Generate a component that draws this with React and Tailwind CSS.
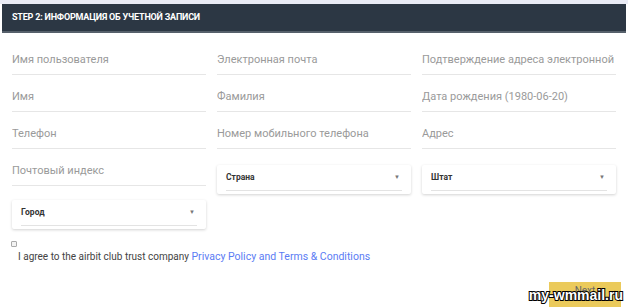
import React from "react";

function TextField({ label }) {
  return (
    <div className="border-b border-[#e6e6e6] pb-[7px]">
      <div className="overflow-hidden whitespace-nowrap text-[11px] leading-[14px] text-[#9a9a9a]">
        {label}
      </div>
    </div>
  );
}

function SelectCard({ label }) {
  return (
    <div className="mt-[1px] h-[29px] rounded-[2px] bg-white px-[9px] pt-[6px] shadow-[0_1px_3px_rgba(0,0,0,0.18)]">
      <div className="flex items-center justify-between border-b border-[#e3e3e3] pb-[7px]">
        <span className="text-[8.5px] font-bold leading-[12px] text-[#333]">
          {label}
        </span>
        <span className="mr-[2px] text-[6px] leading-[12px] text-[#777]">▼</span>
      </div>
    </div>
  );
}

export default function App() {
  return (
    <div
      className="relative h-[307px] w-[628px] overflow-hidden bg-white"
      style={{ fontFamily: "Roboto, 'Liberation Sans', sans-serif" }}
    >
      <div className="h-[4px] bg-[#e9ebf5]" />
      <div className="mx-[2px] flex h-[29px] items-center border-b-2 border-[#56606b] bg-[#2c3744] px-[10px]">
        <span className="text-[9px] font-bold tracking-[-0.2px] text-white">
          STEP 2: ИНФОРМАЦИЯ ОБ УЧЕТНОЙ ЗАПИСИ
        </span>
      </div>

      <div className="mt-[20px] grid grid-cols-3 items-start gap-x-[11px] gap-y-[15px] px-[12px]">
        <TextField label="Имя пользователя" />
        <TextField label="Электронная почта" />
        <TextField label="Подтверждение адреса электронной почты" />
        <TextField label="Имя" />
        <TextField label="Фамилия" />
        <TextField label="Дата рождения (1980-06-20)" />
        <TextField label="Телефон" />
        <TextField label="Номер мобильного телефона" />
        <TextField label="Адрес" />
        <TextField label="Почтовый индекс" />
        <SelectCard label="Страна" />
        <SelectCard label="Штат" />
      </div>

      <div className="mt-[5px] grid grid-cols-3 gap-x-[11px] px-[12px]">
        <SelectCard label="Город" />
      </div>

      <div className="mt-[12px] pl-[11px]">
        <div className="h-[6px] w-[6px] rounded-[1px] border border-[#aaa] bg-[#f3f3f3]" />
        <div className="mt-[3px] pl-[7px] text-[10px] leading-[14px] text-[#444]">
          I agree to the airbit club trust company{" "}
          <span className="text-[10.5px] text-[#5b7cf4]">
            Privacy Policy and Terms &amp; Conditions
          </span>
        </div>
      </div>

      <div className="absolute bottom-0 right-[7px] flex h-[25px] w-[72px] items-start justify-center bg-[#ebca5b] pt-[3px]">
        <span className="text-[10px] leading-[12px] text-[#666]">Next</span>
      </div>

      <div
        className="absolute bottom-[5px] right-[5px] text-[14px] font-bold leading-[14px] text-white"
        style={{
          fontFamily: "'Liberation Sans', sans-serif",
          WebkitTextStroke: "2px black",
          paintOrder: "stroke fill",
        }}
      >
        my-wmmail.ru
      </div>
    </div>
  );
}
